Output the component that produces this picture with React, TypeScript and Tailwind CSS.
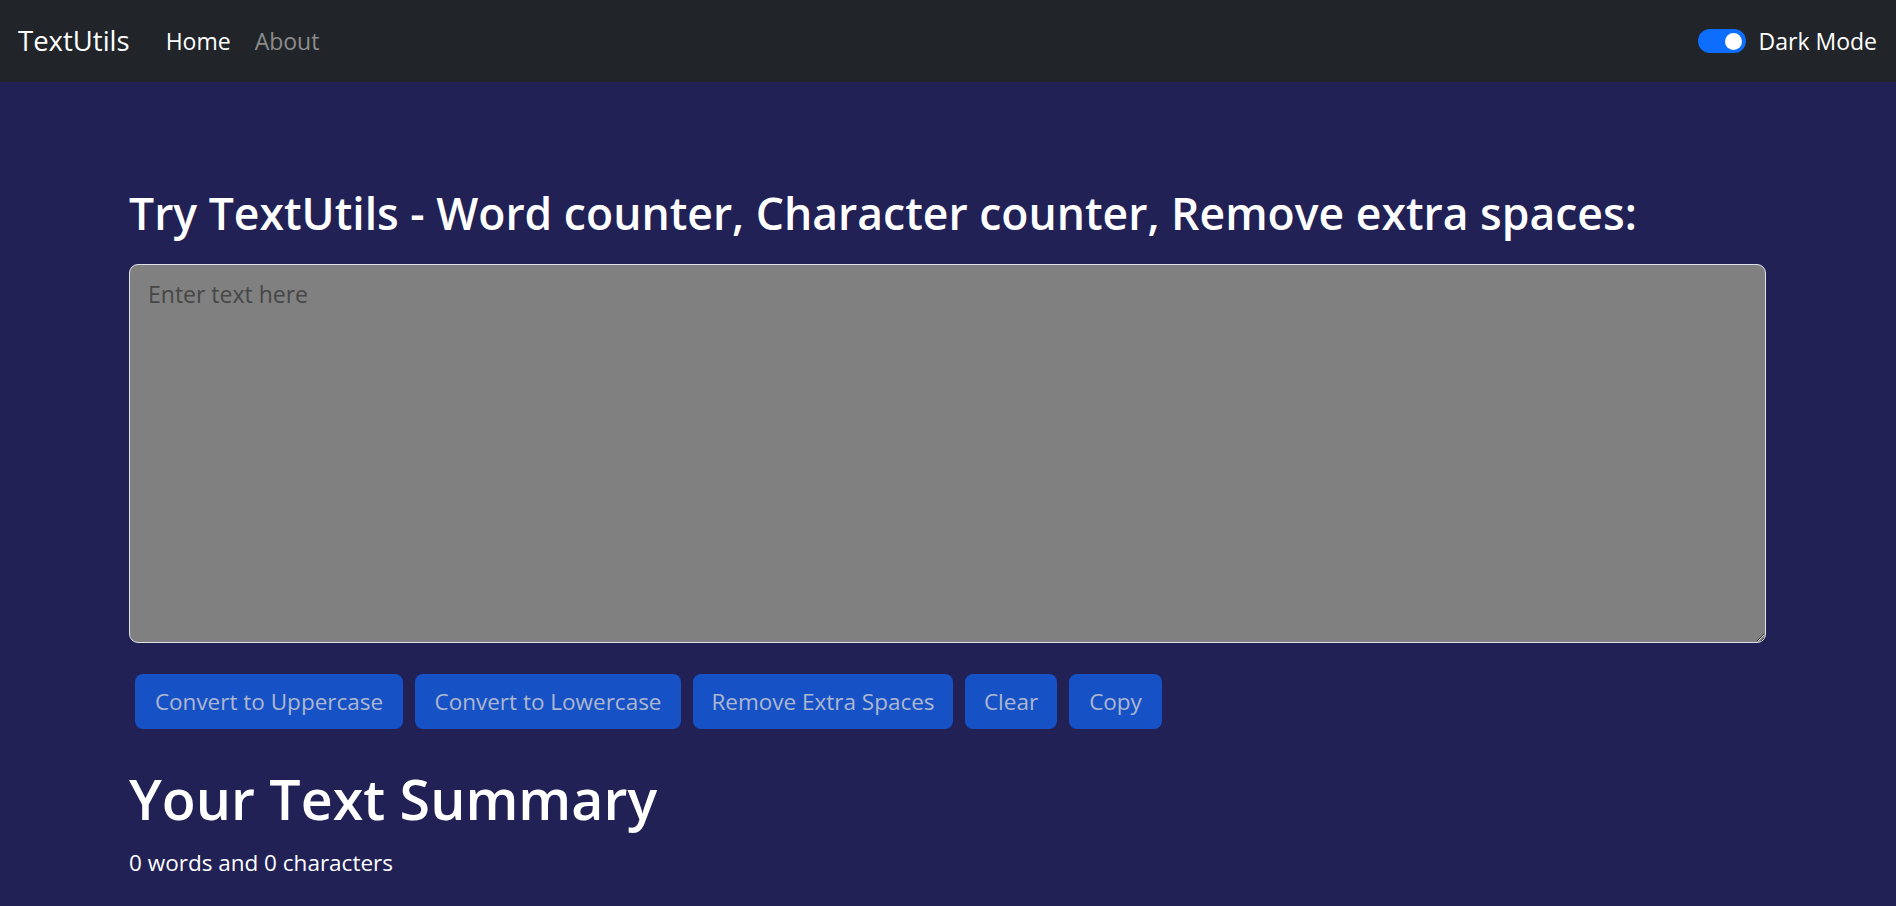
/* TextUtils page - navbar, text area, actions and summary */

const buttons = [
    { label: 'Convert to Uppercase', w: 'w-[268px]' },
    { label: 'Convert to Lowercase', w: 'w-[266px]' },
    { label: 'Remove Extra Spaces', w: 'w-[260px]' },
    { label: 'Clear', w: 'w-[92px]' },
    { label: 'Copy', w: 'w-[93px]' },
];

function Navbar() {
    return (
        <nav className="h-[82px] bg-[#212529] flex items-center justify-between pl-[18px] pr-[19px]">
            <div className="flex items-center">
                <span className="text-[27.5px] text-white font-normal leading-none mr-[36px]">TextUtils</span>
                <a className="text-[23px] text-white leading-none mr-[24px]">Home</a>
                <a className="text-[23px] text-[#8c8c8c] leading-none">About</a>
            </div>
            <div className="flex items-center gap-[13px]">
                {/* Switch */}
                <div className="w-[48px] h-[24px] rounded-full bg-[#0d6efd] flex items-center justify-end pr-[4px]">
                    <span className="w-[17px] h-[17px] rounded-full bg-white" />
                </div>
                <span className="text-[23px] text-white leading-none">Dark Mode</span>
            </div>
        </nav>
    );
}

export default function App() {
    return (
        <div className="min-h-screen bg-[#212156] font-['Open_Sans',sans-serif]">
            <Navbar />
            <main className="w-[1637px] ml-[129px] pt-[103px]">
                <h2 className="text-[44.5px] leading-[55px] font-semibold text-white">
                    Try TextUtils - Word counter, Character counter, Remove extra spaces:
                </h2>
                <textarea
                    className="block mt-[24px] w-full h-[379px] bg-[#808080] border border-[#dee2e6] rounded-[9px] px-[18px] py-[12px] text-[23px] text-white placeholder:text-[#474747] outline-none resize-y"
                    placeholder="Enter text here"
                />
                <div className="flex gap-[12px] mt-[31px] ml-[6px]">
                    {buttons.map((b) => (
                        <button
                            key={b.label}
                            className={`${b.w} h-[55px] rounded-[8px] bg-[#1652c6] text-[#aeb7d0] text-[22.5px] text-center`}
                        >
                            {b.label}
                        </button>
                    ))}
                </div>
                <h1 className="mt-[37px] text-[55.5px] leading-[66px] font-semibold text-white">Your Text Summary</h1>
                <p className="mt-[14px] text-[22.5px] leading-[34px] text-white">0 words and 0 characters</p>
            </main>
        </div>
    );
}
